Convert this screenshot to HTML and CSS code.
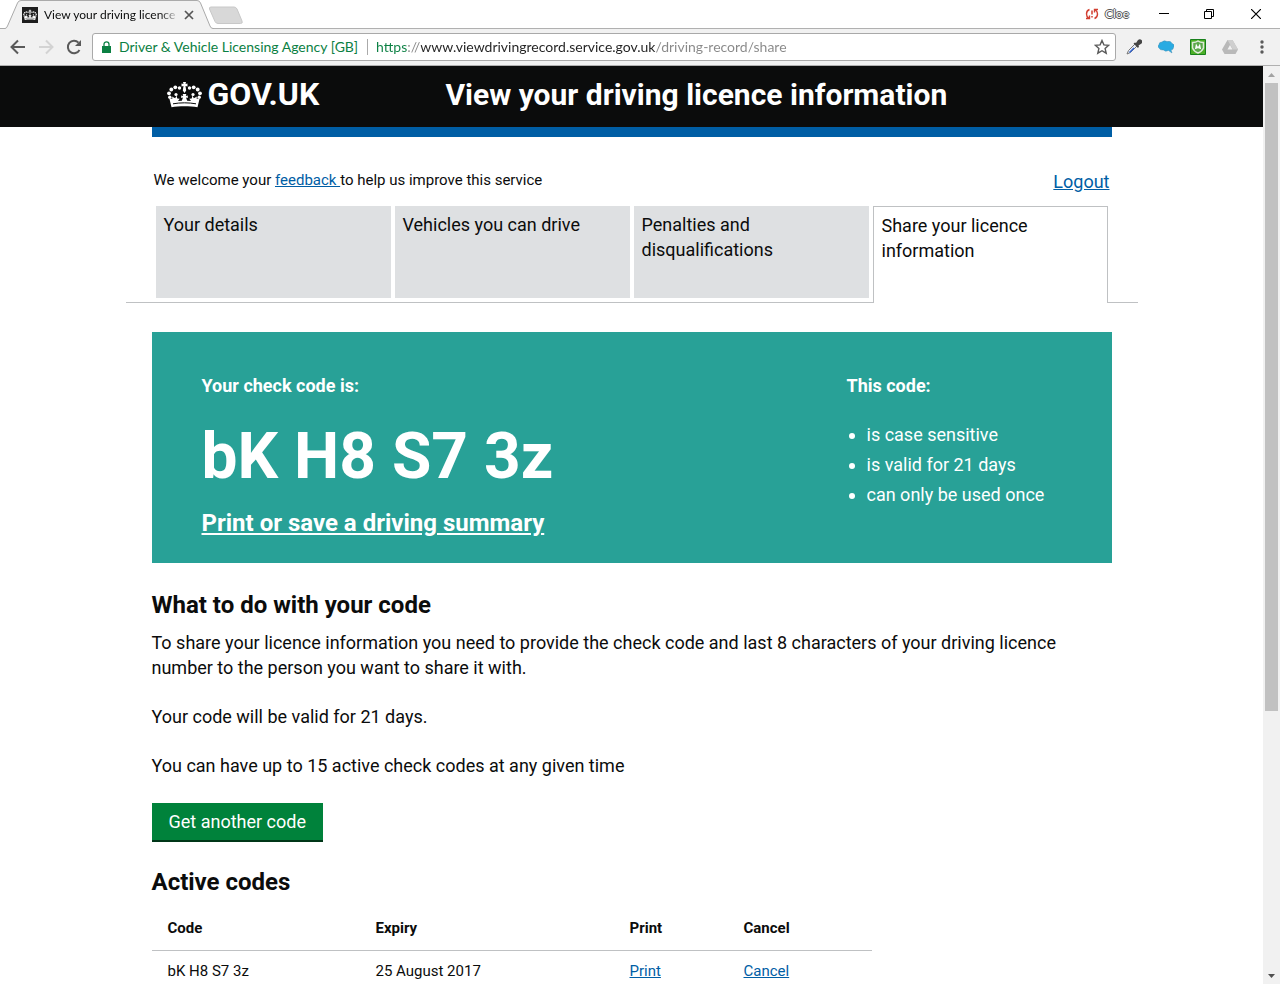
FILE: index.html
```html
<!DOCTYPE html>
<html lang="en">
<head>
  <meta charset="UTF-8">
  <meta name="viewport" content="width=device-width, initial-scale=1.0">
  <title>View your driving licence information</title>
  <link rel="stylesheet" href="styles.css">
</head>
<body>
  <svg class="sprite" aria-hidden="true">
    <symbol id="crown" viewBox="0 0 35 26">
      <g fill="#fff">
        <path d="M16 0h3l-.5 2 2-.5v3l-2-.5.7 4.500-1.700 2.500-1.700-2.500L16.500 4l-2 .5v-3l2 .5z"/>
        <circle cx="12.500" cy="6" r="1.700"/><circle cx="22.500" cy="6" r="1.700"/>
        <circle cx="8.300" cy="5.300" r="1.900"/><circle cx="26.700" cy="5.300" r="1.900"/>
        <circle cx="4.300" cy="7.500" r="1.900"/><circle cx="30.700" cy="7.500" r="1.900"/>
        <circle cx="2" cy="11.300" r="1.900"/><circle cx="33" cy="11.300" r="1.900"/>
        <circle cx="2.800" cy="15.300" r="1.700"/><circle cx="32.200" cy="15.300" r="1.700"/>
        <path d="M2.500 17l3-.5-.5-2 3.200 1.700 1.300-2.700.8 3 2.400.2-1.700 2.300 3.800-.2 1.200-3.200-1.800.4v-2.600l2 .5-.5-2h3.600l-.5 2 2-.5v2.600l-1.800-.4 1.200 3.200 3.800.2-1.700-2.300 2.400-.2.8-3 1.300 2.700 3.200-1.700-.5 2 3 .5-2 8.200c-7.500-1.400-18.500-1.400-26 0z"/>
        <circle cx="9" cy="12.500" r="1.600"/><circle cx="26" cy="12.500" r="1.600"/>
      </g>
      <path d="M6 21.800c7.500-1.300 15.500-1.300 23 0" fill="none" stroke="#0b0c0c" stroke-width="1"/>
    </symbol>
  </svg>

  <div class="titlebar">
    <div class="browser-tab">
      <svg class="tab-shape" viewBox="0 0 214 29" aria-hidden="true">
        <path d="M0 28.500h5q1.500 0 2.500-2.500L17.500 3q1-2.500 3.500-2.500h176q2.500 0 3.500 2.500L210 26q1 2.500 3 2.500h1V29H0z" fill="#f1f1f1"/>
        <path d="M0 28.500h5q1.500 0 2.500-2.500L17.500 3q1-2.500 3.500-2.500h176q2.500 0 3.500 2.500L210 26q1 2.500 3 2.500h1" fill="none" stroke="#aaa"/>
      </svg>
      <span class="favicon"><svg width="14" height="12"><use href="#crown"/></svg></span>
      <span class="tab-title">View your driving licence</span>
      <button class="tab-close" aria-label="Close tab">
        <svg width="10" height="10" viewBox="0 0 10 10"><path d="M1 1l8 8M9 1L1 9" stroke="#555" stroke-width="1.700"/></svg>
      </button>
    </div>
    <button class="new-tab" aria-label="New tab">
      <svg width="36" height="19" viewBox="0 0 36 19"><path d="M3 1h23q2 0 3 2l5 12q1 2.500-1.500 2.500H10q-2 0-3-2L1.500 3Q1 1 3 1z" fill="#d8d8d8" stroke="#c8c8c8"/></svg>
    </button>
    <div class="window-controls">
      <button class="profile">
        <svg width="14" height="12" viewBox="0 0 14 12"><path d="M4.500 1.500Q1.500 2.500 1.500 6q0 2.500 2 4M1 10.500h3.500V7.500M9.500 10.500q3-1 3-4.500 0-2.500-2-4M13 1.500H9.500V4.500" fill="none" stroke="#d23f31" stroke-width="1.400"/><path d="M7 2.500v4M7 8v1.500" stroke="#d23f31" stroke-width="1.500"/></svg>
        <span class="profile-name">Cloe</span>
      </button>
      <button class="window-button" aria-label="Minimise"><svg width="10" height="10" viewBox="0 0 10 10"><path d="M0 4.500h10" stroke="#000"/></svg></button>
      <button class="window-button" aria-label="Restore"><svg width="10" height="10" viewBox="0 0 10 10"><path d="M.5 2.500h7v7h-7zM2.500 2V.5h7v7H8" fill="none" stroke="#000"/></svg></button>
      <button class="window-button" aria-label="Close"><svg width="10" height="10" viewBox="0 0 10 10"><path d="M0 0l10 10M10 0L0 10" stroke="#000" stroke-width="1.200"/></svg></button>
    </div>
  </div>

  <div class="toolbar">
    <button class="tool" aria-label="Back"><svg width="16" height="16" viewBox="0 0 16 16"><path d="M15 8H2M8 1.500L1.500 8 8 14.500" fill="none" stroke="#5a5a5a" stroke-width="2"/></svg></button>
    <button class="tool" aria-label="Forward"><svg width="16" height="16" viewBox="0 0 16 16"><path d="M1 8h13M8 1.500L14.500 8 8 14.500" fill="none" stroke="#d3d3d3" stroke-width="2"/></svg></button>
    <button class="tool" aria-label="Reload"><svg width="16" height="16" viewBox="0 0 16 16"><path d="M13.500 11A6.200 6.200 0 1 1 12.500 3.600" fill="none" stroke="#5a5a5a" stroke-width="2"/><path d="M15 1v6H9z" fill="#5a5a5a"/></svg></button>
    <div class="address-bar">
      <svg width="9" height="12" viewBox="0 0 9 12"><path d="M0 5h9v7H0z" fill="#0b8043"/><path d="M2 5V3.300a2.500 2.500 0 0 1 5 0V5" fill="none" stroke="#0b8043" stroke-width="1.300"/></svg>
      <label class="site-owner" for="address">Driver &amp; Vehicle Licensing Agency [GB]</label>
      <input class="address" id="address" type="text" value="https://www.viewdrivingrecord.service.gov.uk/driving-record/share">
      <button class="bookmark" aria-label="Bookmark this page"><svg width="16" height="16" viewBox="0 0 16 16"><path d="M8 1.500l1.900 4.400 4.800.4-3.600 3.200 1.100 4.700L8 11.700l-4.200 2.500 1.100-4.700-3.600-3.200 4.800-.4z" fill="none" stroke="#5a5a5a" stroke-width="1.400"/></svg></button>
    </div>
    <div class="extensions">
      <button class="extension" aria-label="Colour picker"><svg width="16" height="16" viewBox="0 0 16 16"><path d="M1 15l1.500-3.500L9 5l2 2-6.500 6.500z" fill="#e8edf5" stroke="#777"/><path d="M3 13l4.500-4.500 1 1L4 14z" fill="#3264d2"/><path d="M7.500 4.500l1.500-1 1 .5 2-3q2-1.500 3.500 0t0 3.500l-3 2 .5 1-1 1.500z" fill="#454545"/></svg></button>
      <button class="extension" aria-label="Chat"><svg width="16" height="16" viewBox="1 0 16 16"><path d="M2 9Q0 7.500 2 5.500 2 3 5 3q2-2 5-.5 4-1 5 2 3.500 1 1.500 4 0 2-2.500 2.500l1 3-3.500-2.500Q8 13 6.500 11 3 11.500 2 9z" fill="#29abe2" stroke="#4a90b5" stroke-width=".5"/></svg></button>
      <button class="extension" aria-label="Site safety"><svg width="16" height="16" viewBox="0 0 16 16"><path d="M.5.5h15v15H.5z" fill="#4caf27" stroke="#19801c"/><path d="M2.500 3.500Q6 3.500 8 2q2 1.500 5.500 1.500V9Q12 12.500 8 14 4 12.500 2.500 9z" fill="#5ca84b" stroke="#dfeadb" stroke-width="1.500"/><path d="M5 10l1-5.500L8 8l2-3.500 1 5.500H9.500L9 8.500 8 10 7 8.500 6.500 10z" fill="#fff"/></svg></button>
      <button class="extension" aria-label="Drive"><svg width="16" height="16" viewBox="0 0 16 16"><path d="M5.500 1h5L16 10.500 13.500 15h-11L0 10.500z" fill="#b9b9b9"/><path d="M5.500 1h5L16 10.500h-5z" fill="#cfcfcf"/><path d="M8 6l2.500 4.500h-5z" fill="#f1f1f1"/></svg></button>
      <button class="extension" aria-label="Menu"><svg width="4" height="14" viewBox="0 0 4 14"><g fill="#5a5a5a"><circle cx="2" cy="2" r="1.700"/><circle cx="2" cy="7" r="1.700"/><circle cx="2" cy="12" r="1.700"/></g></svg></button>
    </div>
  </div>

  <div class="viewport">
    <div class="page">
      <header class="header">
        <div class="header-inner">
          <a class="logo" href="#"><svg width="35" height="26"><use href="#crown"/></svg>GOV.UK</a>
          <span class="service-name">View your driving licence information</span>
        </div>
      </header>

      <main class="content">
        <div class="service-bar">
          <p>We welcome your <a href="#">feedback </a>to help us improve this service</p>
          <a class="logout" href="#">Logout</a>
        </div>

        <nav class="tabs">
          <a class="tab" href="#">Your details</a>
          <a class="tab" href="#">Vehicles you can drive</a>
          <a class="tab" href="#">Penalties and disqualifications</a>
          <a class="tab active" href="#">Share your licence information</a>
        </nav>

        <section class="code-panel">
          <div class="code-main">
            <h2>Your check code is:</h2>
            <p class="check-code">bK H8 S7 3z</p>
            <a class="print-summary" href="#">Print or save a driving summary</a>
          </div>
          <div class="code-rules">
            <h2>This code:</h2>
            <ul>
              <li>is case sensitive</li>
              <li>is valid for 21 days</li>
              <li>can only be used once</li>
            </ul>
          </div>
        </section>

        <section class="guidance">
          <h2>What to do with your code</h2>
          <p>To share your licence information you need to provide the check code and last 8 characters of your driving licence number to the person you want to share it with.</p>
          <p>Your code will be valid for 21 days.</p>
          <p>You can have up to 15 active check codes at any given time</p>
          <button class="button">Get another code</button>
        </section>

        <section>
          <h2>Active codes</h2>
          <table class="codes">
            <thead>
              <tr><th>Code</th><th>Expiry</th><th>Print</th><th>Cancel</th></tr>
            </thead>
            <tbody>
              <tr><td>bK H8 S7 3z</td><td>25 August 2017</td><td><a href="#">Print</a></td><td><a href="#">Cancel</a></td></tr>
            </tbody>
          </table>
        </section>
      </main>
    </div>

    <div class="scrollbar">
      <button class="scroll-arrow" aria-label="Scroll up"><svg width="7" height="4" viewBox="0 0 7 4"><path d="M3.500 0L7 4H0z" fill="#a3a3a3"/></svg></button>
      <div class="scroll-track"><div class="scroll-thumb"></div></div>
      <button class="scroll-arrow" aria-label="Scroll down"><svg width="7" height="4" viewBox="0 0 7 4"><path d="M0 0h7L3.500 4z" fill="#505050"/></svg></button>
    </div>
  </div>
</body>
</html>
```
FILE: styles.css
```css
* {
  box-sizing: border-box;
}

body {
  margin: 0;
  height: 100vh;
  overflow: hidden;
  display: flex;
  flex-direction: column;
  font-family: Roboto, sans-serif;
  font-size: 18px;
  line-height: 25px;
  color: #0b0c0c;
  background: #fff;
}

h2, p, ul {
  margin: 0;
}

a {
  color: #005ea5;
}

button {
  border: none;
  padding: 0;
  background: none;
  font: inherit;
  cursor: pointer;
}

svg {
  display: block;
  flex: none;
}

.sprite {
  position: absolute;
  width: 0;
  height: 0;
}

/* Browser window */
.titlebar {
  flex: none;
  display: flex;
  height: 29px;
  border-bottom: 1px solid #b0b0b0;
  font: 12px/16px Lato, sans-serif;
}

.browser-tab {
  position: relative;
  display: flex;
  align-items: center;
  width: 214px;
  height: 29px;
  padding: 0 20px 0 22px;
}

.tab-shape {
  position: absolute;
  left: 0;
  top: 0;
  width: 100%;
  height: 29px;
}

.favicon {
  position: relative;
  display: flex;
  align-items: center;
  justify-content: center;
  flex: none;
  width: 16px;
  height: 16px;
  background: #1d1d1d;
}

.tab-title {
  position: relative;
  flex: 1;
  margin: 0 4px 0 6px;
  white-space: nowrap;
  -webkit-mask-image: linear-gradient(to right, #000 85%, transparent);
  mask-image: linear-gradient(to right, #000 85%, transparent);
}

.tab-close {
  position: relative;
}

.new-tab {
  margin-left: -6px;
  align-self: flex-start;
  padding-top: 6px;
}

.window-controls {
  display: flex;
  margin-left: auto;
  height: 28px;
}

.profile {
  display: flex;
  align-items: center;
  gap: 6px;
  margin-right: 12px;
}

.profile-name {
  color: #fff;
  text-shadow: 1px 0 #555, -1px 0 #555, 0 1px #555, 0 -1px #555;
}

.window-button {
  display: flex;
  align-items: center;
  justify-content: center;
  width: 45px;
}

.window-button:last-child {
  width: 49px;
}

.toolbar {
  flex: none;
  display: flex;
  align-items: center;
  height: 37px;
  padding: 0 16px 0 10px;
  gap: 12px;
  background: #f1f1f1;
  border-bottom: 1px solid #b0b0b0;
  font: 14px/20px Lato, sans-serif;
}

.address-bar {
  flex: 1;
  display: flex;
  align-items: center;
  height: 28px;
  padding: 0 5px 0 9px;
  margin: 0 -2px;
  background: #fff;
  border: 1px solid #a9a9a9;
  border-radius: 3px;
}

.site-owner {
  margin-left: 8px;
  padding-right: 9px;
  color: #0b8043;
  line-height: 16px;
  border-right: 1px solid #aaa;
  white-space: nowrap;
}

/* The scheme, host and path are coloured apart */
.address {
  flex: 1;
  min-width: 0;
  margin-left: 8px;
  padding: 0;
  border: none;
  outline: none;
  font: inherit;
  color: transparent;
  background: linear-gradient(to right, #0b8043 32px, #888 32px 45px, #222 45px 280px, #888 280px);
  -webkit-background-clip: text;
  background-clip: text;
}

.extensions {
  display: flex;
  align-items: center;
  gap: 16px;
}

.extension:last-child {
  margin-left: 6px;
}

.viewport {
  flex: 1;
  min-height: 0;
  display: flex;
}

.page {
  flex: 1;
  overflow: hidden;
}

.scrollbar {
  display: flex;
  flex-direction: column;
  width: 17px;
  background: #f1f1f1;
}

.scroll-arrow {
  display: flex;
  align-items: center;
  justify-content: center;
  height: 17px;
}

.scroll-track {
  flex: 1;
  padding: 0 2px;
}

.scroll-thumb {
  height: 71%;
  background: #c1c1c1;
}

/* GOV.UK header */
.header {
  background: #0b0c0c;
}

.header-inner,
.content {
  max-width: 960px;
  margin: 0 auto;
}

.header-inner {
  display: flex;
  align-items: center;
  height: 61px;
  padding: 0 15px 4px;
  color: #fff;
  font-size: 30px;
  font-weight: bold;
}

.logo {
  display: flex;
  align-items: center;
  gap: 6px;
  width: 30%;
  color: #fff;
  font-size: 32px;
  text-decoration: none;
}

.content {
  border-top: 10px solid #005ea5;
}

.service-bar {
  display: flex;
  justify-content: space-between;
  padding: 31px 2px 12px;
  font-size: 15px;
}

.logout {
  padding-top: 1px;
  font-size: 18px;
}

/* Navigation tabs */
.tabs {
  display: grid;
  grid-template-columns: repeat(4, 1fr);
  gap: 4px;
  margin: 0 -26px;
  padding: 0 30px;
  border-bottom: 1px solid #bfc1c3;
}

.tab {
  height: 92px;
  margin-bottom: 4px;
  padding: 6px 8px;
  color: #0b0c0c;
  background: #dee0e2;
  text-decoration: none;
}

.tab.active {
  height: 97px;
  margin-bottom: -1px;
  background: #fff;
  border: 1px solid #bfc1c3;
  border-bottom: none;
}

/* Check code */
.code-panel {
  display: flex;
  margin-top: 29px;
  padding: 41px 50px 26px;
  color: #fff;
  background: #28a197;
}

.code-main {
  width: 75%;
}

.code-panel h2 {
  font-size: 18px;
  line-height: 25px;
}

.check-code {
  margin: 27px 0 22px;
  font-size: 64px;
  font-weight: bold;
  line-height: 64px;
}

.print-summary {
  color: #fff;
  font-size: 24px;
  font-weight: bold;
}

.code-rules ul {
  margin-top: 22px;
  padding-left: 20px;
  line-height: 30px;
}

.content h2 {
  font-weight: bold;
}

.guidance h2,
.guidance + section h2 {
  font-size: 24px;
  line-height: 30px;
}

.guidance {
  padding: 27px 0 25px;
}

.guidance h2 {
  margin-bottom: 10px;
}

.guidance p {
  margin-bottom: 24px;
}

.button {
  display: block;
  height: 39px;
  margin-top: 25px;
  padding: 0 17px;
  color: #fff;
  background: #00823b;
  border-bottom: 2px solid #003618;
}

.codes {
  width: 75%;
  margin-top: 9px;
  border-collapse: collapse;
  table-layout: fixed;
  font-size: 15px;
  line-height: 20px;
  text-align: left;
}

.codes th,
.codes td {
  padding: 12px 0 12px 16px;
  border-bottom: 1px solid #bfc1c3;
}

.codes td {
  padding-top: 10px;
}

.codes th:nth-child(1) {
  width: 208px;
}

.codes th:nth-child(2) {
  width: 254px;
}

.codes th:nth-child(3) {
  width: 114px;
}
```
